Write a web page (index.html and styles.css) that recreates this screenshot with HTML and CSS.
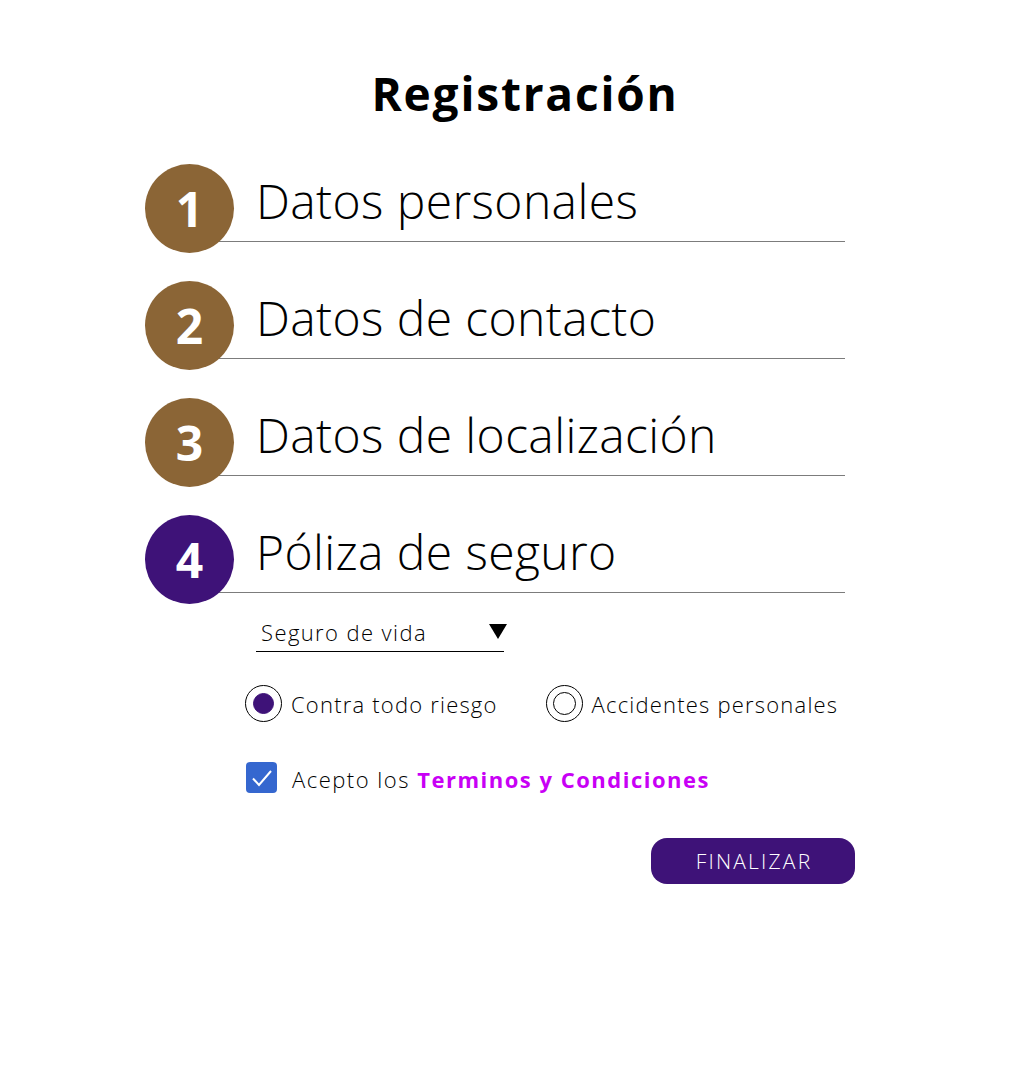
FILE: index.html
```html
<!DOCTYPE html>
<html lang="es">
<head>
<meta charset="utf-8">
<title>Registración</title>
<link rel="stylesheet" href="styles.css">
</head>
<body>
<main class="page">
  <h1 class="title">Registración</h1>
  <ol class="steps">
    <li class="step"><span class="num num-done">1</span><span class="label">Datos personales</span></li>
    <li class="step"><span class="num num-done">2</span><span class="label">Datos de contacto</span></li>
    <li class="step"><span class="num num-done">3</span><span class="label">Datos de localización</span></li>
    <li class="step"><span class="num num-active">4</span><span class="label">Póliza de seguro</span></li>
  </ol>
  <section class="policy">
    <div class="select">
      <span class="select-text">Seguro de vida</span>
      <svg class="select-arrow" width="18" height="15" viewBox="0 0 18 15"><polygon points="0,0 18,0 9,15" fill="#000"/></svg>
    </div>
    <div class="radios">
      <label class="radio"><span class="radio-ring"><span class="radio-dot radio-dot-on"></span></span><span class="radio-text">Contra todo riesgo</span></label>
      <label class="radio"><span class="radio-ring"><span class="radio-dot"></span></span><span class="radio-text">Accidentes personales</span></label>
    </div>
    <div class="terms">
      <span class="check">
        <svg width="22" height="18" viewBox="0 0 22 18"><polyline points="2,9.5 8,16 20,2" fill="none" stroke="#fff" stroke-width="2"/></svg>
      </span>
      <span class="terms-text">Acepto los <strong class="terms-link">Terminos y Condiciones</strong></span>
    </div>
  </section>
  <div class="actions">
    <button class="btn" type="button">FINALIZAR</button>
  </div>
</main>
</body>
</html>
```

FILE: styles.css
```css
* { box-sizing: border-box; }
html, body { margin: 0; padding: 0; background: #fff; }
body {
  font-family: "Open Sans", "Noto Sans", "DejaVu Sans", sans-serif;
  color: #000;
}
.page {
  width: 710px;
  margin-left: 145px;
  padding-top: 63px;
}
.title {
  margin: 0 0 41px 0;
  text-align: center;
  font-size: 46px;
  line-height: 60px;
  font-weight: 700;
  letter-spacing: 1.8px;
  padding-left: 50px;
}
.steps {
  list-style: none;
  margin: 0;
  padding: 0;
  display: flex;
  flex-direction: column;
  gap: 28px;
}
.step {
  display: flex;
  align-items: flex-start;
  height: 89px;
}
.num {
  flex: none;
  width: 89px;
  height: 89px;
  border-radius: 50%;
  display: flex;
  align-items: center;
  justify-content: center;
  color: #fff;
  font-weight: 700;
  font-size: 48px;
  line-height: 1;
  position: relative;
  z-index: 1;
}
.num-done { background: #8b6536; }
.num-active { background: #3e1278; }
.label {
  flex: none;
  width: 655px;
  height: 78px;
  margin-left: -44px;
  padding-left: 66px;
  padding-top: 13px;
  border-bottom: 1px solid #7c7c7c;
  font-size: 48px;
  line-height: 48px;
  font-weight: 300;
  letter-spacing: 0.4px;
  white-space: nowrap;
}
.policy {
  padding-left: 100px;
}
.select {
  margin-top: 14px;
  margin-left: 11px;
  width: 248px;
  display: flex;
  align-items: center;
  justify-content: space-between;
  padding: 0 0 5px 5px;
  border-bottom: 1.5px solid #000;
}
.select-text {
  font-size: 22px;
  line-height: 28px;
  font-weight: 300;
  letter-spacing: 1.4px;
}
.select-arrow { margin-right: -3px; margin-top: -2px; }
.radios {
  margin-top: 33px;
  display: flex;
  gap: 48px;
}
.radio {
  display: flex;
  align-items: center;
  gap: 9px;
}
.radio-ring {
  width: 37px;
  height: 37px;
  border: 1px solid #000;
  border-radius: 50%;
  display: flex;
  align-items: center;
  justify-content: center;
}
.radio-dot {
  width: 23px;
  height: 23px;
  border-radius: 50%;
  border: 1px solid #000;
}
.radio-dot-on {
  background: #3e1278;
  border-color: #3e1278;
  width: 21px;
  height: 21px;
}
.radio-text {
  font-size: 22px;
  line-height: 30px;
  font-weight: 300;
  letter-spacing: 1.2px;
}
.terms {
  margin-top: 38px;
  margin-left: 1px;
  display: flex;
  align-items: center;
  gap: 15px;
}
.check {
  width: 31px;
  height: 31px;
  border-radius: 4px;
  background: #3567cf;
  display: flex;
  align-items: center;
  justify-content: center;
}
.terms-text {
  font-size: 22px;
  line-height: 31px;
  font-weight: 300;
  letter-spacing: 1.5px;
  padding-top: 4px;
}
.terms-link {
  color: #c800f5;
  font-weight: 700;
}
.actions {
  margin-top: 43px;
  display: flex;
  justify-content: flex-end;
}
.btn {
  width: 204px;
  height: 46px;
  border: none;
  border-radius: 16px;
  background: #3e1278;
  color: #fff;
  font-family: "Open Sans", "Noto Sans", sans-serif;
  font-size: 21px;
  font-weight: 300;
  letter-spacing: 2.2px;
  padding: 0 0 0 2px;
  cursor: pointer;
}
```
